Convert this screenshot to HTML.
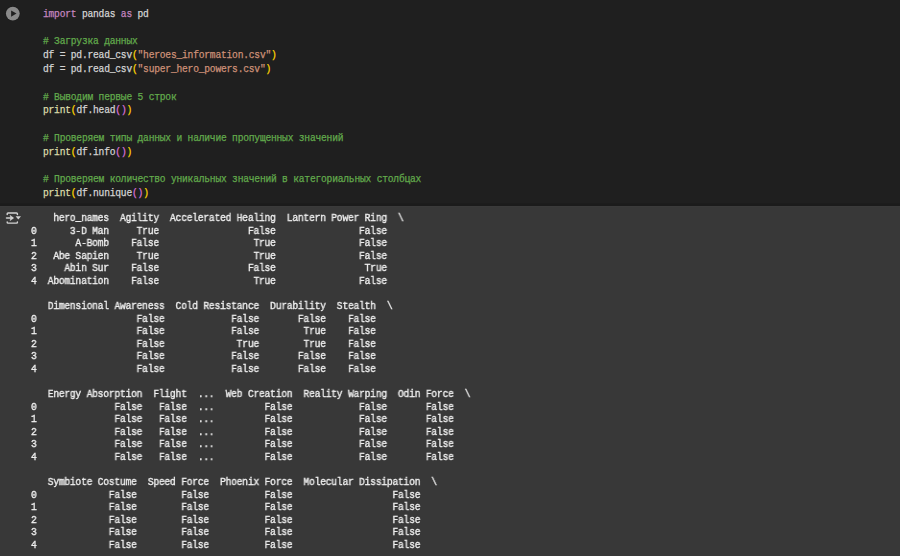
<!DOCTYPE html>
<html><head><meta charset="utf-8">
<style>
html,body{margin:0;padding:0;width:900px;height:556px;overflow:hidden;background:#1f1f1f;}
body{position:relative;font-family:"Liberation Mono",monospace;}
#out{position:absolute;left:0;top:206px;width:900px;height:350px;background:#383838;}
#shadow{position:absolute;left:0;top:203px;width:900px;height:3px;background:linear-gradient(#1d1d1d 0px,#1b1b1b 1px,#1b1b1b 3px);}
#hl{position:absolute;left:0;top:206px;width:900px;height:1px;background:#3a3a3a;}
.ln{position:absolute;white-space:pre;font-family:"Liberation Mono",monospace;font-size:10px;letter-spacing:-0.2083px;transform:scaleX(0.96);transform-origin:0 0;line-height:12px;height:12px;}
.cd{-webkit-text-stroke:0.25px currentColor;left:43.3px;color:#d4d4d4;}
.op{-webkit-text-stroke:0.35px currentColor;left:31.0px;color:#f0f0f0;will-change:transform;}
.k{color:#c586c0}.c{color:#62aa4c}.s{color:#ce9178}.f{color:#dcdcaa}.p1{color:#ffd700}.p2{color:#da70d6}
</style></head><body>
<div id="shadow"></div>
<div id="out"></div>
<div id="hl"></div>
<svg style="position:absolute;left:0;top:0" width="30" height="30" viewBox="0 0 30 30">
<circle cx="12.8" cy="13.6" r="7.4" fill="#181818" opacity="0.6"/>
<circle cx="12.8" cy="13.6" r="6.9" fill="#8a8a8a"/>
<path d="M11.1 10.5 L16.5 13.6 L11.1 16.7 Z" fill="#202020"/>
</svg>
<svg style="position:absolute;left:0;top:205px" width="30" height="25" viewBox="0 0 30 25">
<g fill="none" stroke="#d2d2d2" stroke-width="1.45" stroke-linecap="round" stroke-linejoin="round">
<path d="M7.2 9.5 V8.8 Q7.2 8 8 8 H16.6 Q17.4 8 17.4 8.8 V9.5"/>
<path d="M7.2 16.9 V17.3 Q7.2 18.1 8 18.1 H16.6 Q17.4 18.1 17.4 17.3 V16.9"/>
<path d="M6.5 13 H12.4"/>
</g>
<path d="M10.1 10.4 L13.6 13 L10.1 15.6 L10.9 13 Z" fill="#d2d2d2" stroke="#d2d2d2" stroke-width="0.6" stroke-linejoin="round"/>
<path d="M15.6 11.2 H21 L18.3 14.6 Z" fill="#d2d2d2"/>
</svg>
<div class="ln cd" style="top:8.90px"><span class="k">import</span> pandas <span class="k">as</span> pd</div>
<div class="ln cd" style="top:36.44px"><span class="c"># Загрузка данных</span></div>
<div class="ln cd" style="top:50.21px">df = pd.read_csv<span class="p1">(</span><span class="s">"heroes_information.csv"</span><span class="p1">)</span></div>
<div class="ln cd" style="top:63.98px">df = pd.read_csv<span class="p1">(</span><span class="s">"super_hero_powers.csv"</span><span class="p1">)</span></div>
<div class="ln cd" style="top:91.52px"><span class="c"># Выводим первые 5 строк</span></div>
<div class="ln cd" style="top:105.29px"><span class="f">print</span><span class="p1">(</span>df.head<span class="p2">()</span><span class="p1">)</span></div>
<div class="ln cd" style="top:132.83px"><span class="c"># Проверяем типы данных и наличие пропущенных значений</span></div>
<div class="ln cd" style="top:146.60px"><span class="f">print</span><span class="p1">(</span>df.info<span class="p2">()</span><span class="p1">)</span></div>
<div class="ln cd" style="top:174.14px"><span class="c"># Проверяем количество уникальных значений в категориальных столбцах</span></div>
<div class="ln cd" style="top:187.91px"><span class="f">print</span><span class="p1">(</span>df.nunique<span class="p2">()</span><span class="p1">)</span></div>
<div class="ln op" style="top:213.20px">    hero_names  Agility  Accelerated Healing  Lantern Power Ring  \</div>
<div class="ln op" style="top:225.76px">0      3-D Man     True                False               False   </div>
<div class="ln op" style="top:238.32px">1       A-Bomb    False                 True               False   </div>
<div class="ln op" style="top:250.88px">2   Abe Sapien     True                 True               False   </div>
<div class="ln op" style="top:263.44px">3     Abin Sur    False                False                True   </div>
<div class="ln op" style="top:276.00px">4  Abomination    False                 True               False   </div>
<div class="ln op" style="top:301.12px">   Dimensional Awareness  Cold Resistance  Durability  Stealth  \</div>
<div class="ln op" style="top:313.68px">0                  False            False       False    False   </div>
<div class="ln op" style="top:326.24px">1                  False            False        True    False   </div>
<div class="ln op" style="top:338.80px">2                  False             True        True    False   </div>
<div class="ln op" style="top:351.36px">3                  False            False       False    False   </div>
<div class="ln op" style="top:363.92px">4                  False            False       False    False   </div>
<div class="ln op" style="top:389.04px">   Energy Absorption  Flight  ...  Web Creation  Reality Warping  Odin Force  \</div>
<div class="ln op" style="top:401.60px">0              False   False  ...         False            False       False   </div>
<div class="ln op" style="top:414.16px">1              False   False  ...         False            False       False   </div>
<div class="ln op" style="top:426.72px">2              False   False  ...         False            False       False   </div>
<div class="ln op" style="top:439.28px">3              False   False  ...         False            False       False   </div>
<div class="ln op" style="top:451.84px">4              False   False  ...         False            False       False   </div>
<div class="ln op" style="top:476.96px">   Symbiote Costume  Speed Force  Phoenix Force  Molecular Dissipation  \</div>
<div class="ln op" style="top:489.52px">0             False        False          False                  False   </div>
<div class="ln op" style="top:502.08px">1             False        False          False                  False   </div>
<div class="ln op" style="top:514.64px">2             False        False          False                  False   </div>
<div class="ln op" style="top:527.20px">3             False        False          False                  False   </div>
<div class="ln op" style="top:539.76px">4             False        False          False                  False   </div>
</body></html>
